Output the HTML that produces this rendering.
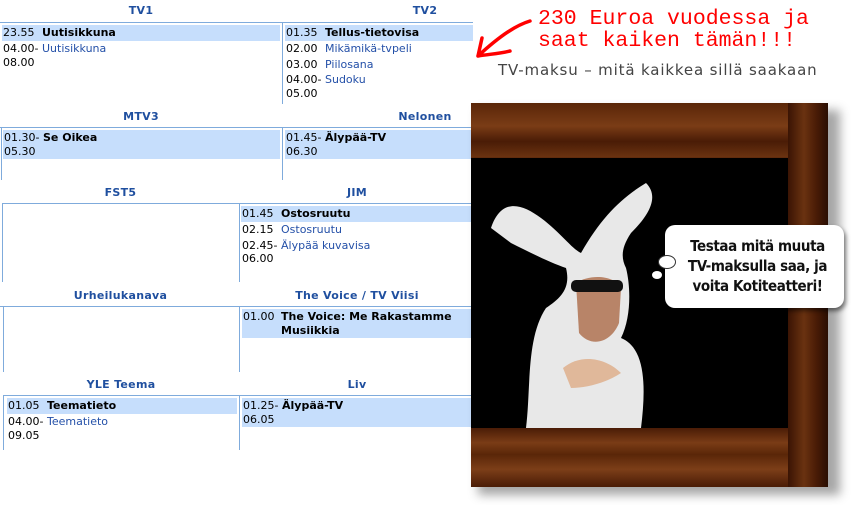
<!DOCTYPE html>
<html><head><meta charset="utf-8"><style>
body{margin:0;width:857px;height:505px;background:#fff;position:relative;overflow:hidden;font-family:"DejaVu Sans","Liberation Sans",sans-serif;font-size:11px;color:#000}
div,span{position:absolute}
.h{color:#1f4f9f;font-weight:bold;font-size:11px;text-align:center;white-space:nowrap;letter-spacing:0.3px}
.hl{background:#c6defc}
.vl{background:#7fabdc;width:1px}
.hr{background:#7fabdc;height:1px}
.t{white-space:nowrap;line-height:14px}
.b{font-weight:bold}
.a{color:#2450a8}
</style></head><body>
<!-- Row1 -->
<div class="h" style="left:0;width:282px;top:4px">TV1</div>
<div class="h" style="left:380px;width:90px;top:4px">TV2</div>
<div class="hr" style="left:0;top:22px;width:473px"></div>
<div class="vl" style="left:282px;top:22px;height:82px"></div>
<div class="hl" style="left:2px;top:25px;width:278px;height:16px"></div>
<div class="hl" style="left:285px;top:25px;width:188px;height:16px"></div>
<div class="t" style="left:3px;top:26px">23.55</div><div class="t b" style="left:42px;top:26px">Uutisikkuna</div>
<div class="t" style="left:3px;top:42px">04.00-</div><div class="t a" style="left:42px;top:42px">Uutisikkuna</div>
<div class="t" style="left:3px;top:56px">08.00</div>
<div class="t" style="left:286px;top:26px">01.35</div><div class="t b" style="left:325px;top:26px">Tellus-tietovisa</div>
<div class="t" style="left:286px;top:42px">02.00</div><div class="t a" style="left:325px;top:42px">Mikämikä-tvpeli</div>
<div class="t" style="left:286px;top:58px">03.00</div><div class="t a" style="left:325px;top:58px">Piilosana</div>
<div class="t" style="left:286px;top:73px">04.00-</div><div class="t a" style="left:325px;top:73px">Sudoku</div>
<div class="t" style="left:286px;top:87px">05.00</div>
<!-- Row2 -->
<div class="h" style="left:0;width:282px;top:110px">MTV3</div>
<div class="h" style="left:380px;width:90px;top:110px">Nelonen</div>
<div class="hr" style="left:0;top:127px;width:473px"></div>
<div class="vl" style="left:1px;top:127px;height:53px"></div>
<div class="vl" style="left:282px;top:127px;height:53px"></div>
<div class="hl" style="left:3px;top:130px;width:277px;height:29px"></div>
<div class="hl" style="left:285px;top:130px;width:188px;height:29px"></div>
<div class="t" style="left:4px;top:131px">01.30-</div><div class="t b" style="left:43px;top:131px">Se Oikea</div>
<div class="t" style="left:4px;top:145px">05.30</div>
<div class="t" style="left:286px;top:131px">01.45-</div><div class="t b" style="left:325px;top:131px">Älypää-TV</div>
<div class="t" style="left:286px;top:145px">06.30</div>
<!-- Row3 -->
<div class="h" style="left:2px;width:237px;top:186px">FST5</div>
<div class="h" style="left:239px;width:236px;top:186px">JIM</div>
<div class="hr" style="left:2px;top:203px;width:471px"></div>
<div class="vl" style="left:2px;top:203px;height:79px"></div>
<div class="vl" style="left:239px;top:203px;height:79px"></div>
<div class="hl" style="left:241px;top:206px;width:232px;height:16px"></div>
<div class="t" style="left:242px;top:207px">01.45</div><div class="t b" style="left:281px;top:207px">Ostosruutu</div>
<div class="t" style="left:242px;top:223px">02.15</div><div class="t a" style="left:281px;top:223px">Ostosruutu</div>
<div class="t" style="left:242px;top:239px">02.45-</div><div class="t a" style="left:281px;top:239px">Älypää kuvavisa</div>
<div class="t" style="left:242px;top:252px">06.00</div>
<!-- Row4 -->
<div class="h" style="left:2px;width:237px;top:289px">Urheilukanava</div>
<div class="h" style="left:239px;width:236px;top:289px">The Voice / TV Viisi</div>
<div class="hr" style="left:0;top:306px;width:473px"></div>
<div class="vl" style="left:3px;top:306px;height:66px"></div>
<div class="vl" style="left:239px;top:306px;height:66px"></div>
<div class="hl" style="left:242px;top:309px;width:231px;height:29px"></div>
<div class="t" style="left:243px;top:310px">01.00</div><div class="t b" style="left:281px;top:310px">The Voice: Me Rakastamme</div>
<div class="t b" style="left:281px;top:324px">Musiikkia</div>
<!-- Row5 -->
<div class="h" style="left:3px;width:236px;top:378px">YLE Teema</div>
<div class="h" style="left:239px;width:236px;top:378px">Liv</div>
<div class="hr" style="left:3px;top:395px;width:470px"></div>
<div class="vl" style="left:3px;top:395px;height:55px"></div>
<div class="vl" style="left:239px;top:395px;height:55px"></div>
<div class="hl" style="left:7px;top:398px;width:230px;height:16px"></div>
<div class="hl" style="left:242px;top:398px;width:231px;height:29px"></div>
<div class="t" style="left:8px;top:399px">01.05</div><div class="t b" style="left:47px;top:399px">Teematieto</div>
<div class="t" style="left:8px;top:415px">04.00-</div><div class="t a" style="left:47px;top:415px">Teematieto</div>
<div class="t" style="left:8px;top:429px">09.05</div>
<div class="t" style="left:243px;top:399px">01.25-</div><div class="t b" style="left:282px;top:399px">Älypää-TV</div>
<div class="t" style="left:243px;top:413px">06.05</div>

<!-- Right promo -->
<svg style="position:absolute;left:472px;top:14px" width="62" height="46"><path d="M58 7 C45 11 30 20 6 42 M6 42 L10 24 M6 42 C18 40 26 40 38 37" stroke="#f00" stroke-width="3.5" fill="none" stroke-linecap="round"/></svg>
<div style="left:538px;top:8px;color:#f00;font-family:'Liberation Mono',monospace;font-size:21.5px;line-height:22px;white-space:pre">230 Euroa vuodessa ja
saat kaiken tämän!!!</div>
<div style="left:498px;top:61px;color:#444;font-family:'DejaVu Sans',sans-serif;font-size:15px;letter-spacing:0.85px;white-space:nowrap">TV-maksu – mitä kaikkea sillä saakaan</div>

<div style="left:478px;top:110px;width:362px;height:385px;background:rgba(0,0,0,.35);filter:blur(5px)"></div>
<div style="left:471px;top:103px;width:357px;height:384px;background:linear-gradient(180deg,#5a2608 0%,#7a3c16 6%,#4a1c06 10%,#6a3210 14%,#3a1404 15%,#4a1c06 100%)"></div>
<div style="left:471px;top:428px;width:357px;height:59px;background:linear-gradient(180deg,#4a1c06,#7a3c16 25%,#5a2608 45%,#7c3e18 70%,#4a1c06)"></div>
<div style="left:788px;top:103px;width:40px;height:384px;background:linear-gradient(90deg,#3a1404,#6a3210 40%,#4a1c06 70%,#2a0e02)"></div>
<div style="left:471px;top:158px;width:317px;height:270px;background:#000"></div>
<svg style="position:absolute;left:471px;top:158px" width="317" height="270">
<path d="M20 70 C30 40 50 45 70 60 C90 75 100 90 110 95 C130 60 150 40 175 25 C190 40 175 60 160 75 C150 90 150 100 155 110 C160 130 160 160 150 180 C175 190 175 230 170 270 L55 270 C60 230 55 180 75 150 C90 140 100 130 95 110 C80 105 60 95 40 85 Z" fill="#e8e8e8"/>
<path d="M105 125 C120 115 145 118 150 130 L148 165 C140 185 120 190 108 175 Z" fill="#b88468"/>
<rect x="100" y="122" width="52" height="12" rx="5" fill="#111"/>
<path d="M92 210 C110 195 135 200 150 215 C135 225 115 230 100 230 Z" fill="#e0b89a"/>
</svg>
<div style="left:665px;top:225px;width:179px;height:83px;background:#fff;border-radius:10px;box-shadow:2px 3px 4px rgba(0,0,0,.5)"></div>
<div style="left:658px;top:255px;width:16px;height:12px;background:#fff;border-radius:50%;border:1px solid #333"></div>
<div style="left:652px;top:271px;width:10px;height:8px;background:#fff;border-radius:50%"></div>
<div style="left:668px;top:236px;width:179px;text-align:center;font-family:'DejaVu Sans',sans-serif;font-stretch:condensed;font-weight:bold;font-size:15px;line-height:20px;color:#111;letter-spacing:-0.4px">Testaa mitä muuta<br>TV-maksulla saa, ja<br>voita Kotiteatteri!</div>
</body></html>
